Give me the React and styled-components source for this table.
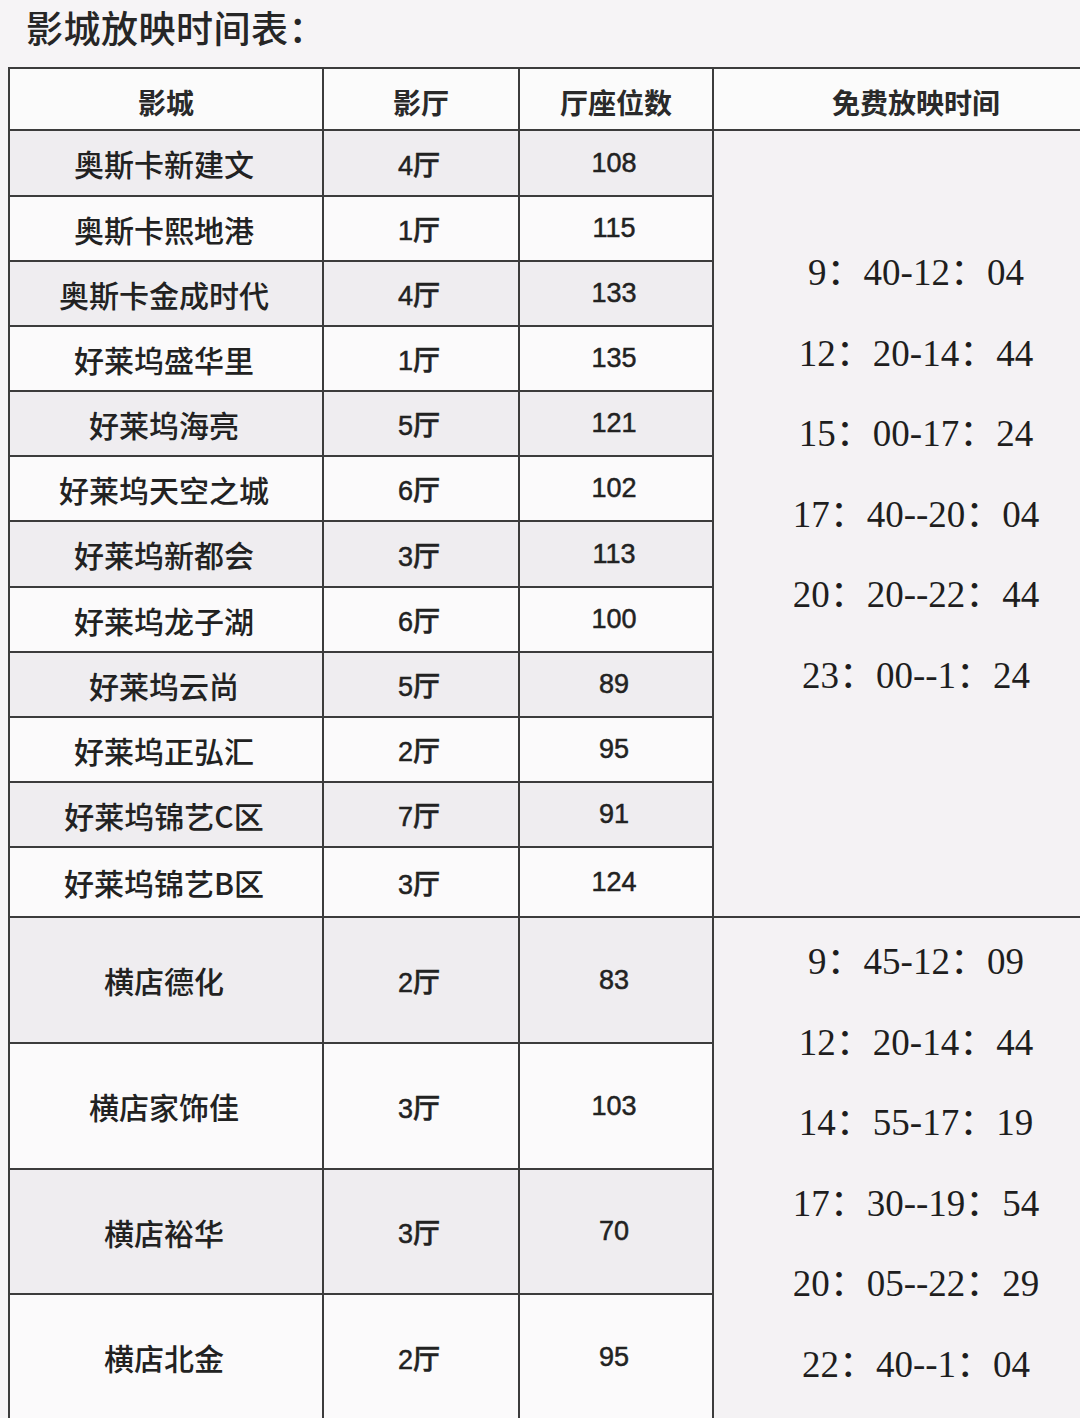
import React from "react";
import styled, { createGlobalStyle } from "styled-components";

const Global = createGlobalStyle`
  html, body {
    margin: 0;
    padding: 0;
    width: 1080px;
    height: 1418px;
    overflow: hidden;
    background: #f6f4f6;
  }
  body {
    font-family: "Noto Sans CJK SC", "Liberation Sans", sans-serif;
    color: #222;
  }
`;

const Page = styled.div`
  width: 1080px;
  height: 1418px;
  overflow: hidden;
  display: flex;
  flex-direction: column;
`;

const Title = styled.h1`
  margin: 8px 0 21px 26px;
  font-family: "Noto Sans CJK SC", sans-serif;
  font-size: 37px;
  line-height: 38px;
  font-weight: 500;
  color: #262626;
  letter-spacing: 0.5px;
`;

const Table = styled.div`
  margin-left: 8px;
  width: 1111px;
  display: grid;
  grid-template-columns: 314px 196px 194px 406px;
  grid-template-rows: 62px 66px 65px 65px 65px 65px 65px 66px 65px 65px 65px 65px 70px 126px 126px 125px 126px;
  border-left: 2px solid #3c3c3c;
  border-top: 2px solid #3c3c3c;
  box-sizing: border-box;
`;

const Cell = styled.div`
  box-sizing: border-box;
  border-right: 2px solid #3c3c3c;
  border-bottom: 2px solid #3c3c3c;
  display: flex;
  align-items: center;
  justify-content: center;
  background: ${(p) => (p.$shade ? "#efedf0" : "#fbfafb")};
  color: #222;
`;

const HeadCell = styled(Cell)`
  background: #fbfbfb;
  font-family: "Noto Sans CJK SC", sans-serif;
  font-size: 28px;
  font-weight: 700;
  padding-top: 6px;
  color: #2a2a2a;
`;

const NameCell = styled(Cell)`
  font-family: "Noto Sans CJK SC", sans-serif;
  font-size: 30px;
  font-weight: 500;
  padding-right: 4px;
`;

const NumCell = styled(Cell)`
  font-family: "Liberation Sans", "Noto Sans CJK SC", sans-serif;
  font-size: 27px;
  font-weight: 500;
  -webkit-text-stroke: 0.5px #222;
  padding-right: 4px;
`;

const TimeCell = styled.div`
  box-sizing: border-box;
  border-right: 2px solid #3c3c3c;
  border-bottom: 2px solid #3c3c3c;
  background: #f4f2f4;
  grid-column: 4;
  grid-row: ${(p) => p.$rows};
  display: flex;
  flex-direction: column;
  align-items: center;
  justify-content: flex-start;
  padding-top: ${(p) => p.$top}px;
`;

const TimeLine = styled.div`
  font-family: "Liberation Serif", "Noto Sans CJK SC", serif;
  font-size: 37px;
  line-height: 80.5px;
  color: #1e1e1e;
  white-space: nowrap;
`;

const groupA = [
  ["奥斯卡新建文", "4厅", "108"],
  ["奥斯卡熙地港", "1厅", "115"],
  ["奥斯卡金成时代", "4厅", "133"],
  ["好莱坞盛华里", "1厅", "135"],
  ["好莱坞海亮", "5厅", "121"],
  ["好莱坞天空之城", "6厅", "102"],
  ["好莱坞新都会", "3厅", "113"],
  ["好莱坞龙子湖", "6厅", "100"],
  ["好莱坞云尚", "5厅", "89"],
  ["好莱坞正弘汇", "2厅", "95"],
  ["好莱坞锦艺C区", "7厅", "91"],
  ["好莱坞锦艺B区", "3厅", "124"],
];

const groupB = [
  ["横店德化", "2厅", "83"],
  ["横店家饰佳", "3厅", "103"],
  ["横店裕华", "3厅", "70"],
  ["横店北金", "2厅", "95"],
];

const timesA = [
  "9：40-12：04",
  "12：20-14：44",
  "15：00-17：24",
  "17：40--20：04",
  "20：20--22：44",
  "23：00--1：24",
];

const timesB = [
  "9：45-12：09",
  "12：20-14：44",
  "14：55-17：19",
  "17：30--19：54",
  "20：05--22：29",
  "22：40--1：04",
];

function Row({ data, shade }) {
  return (
    <>
      <NameCell $shade={shade}>{data[0]}</NameCell>
      <NumCell $shade={shade}>{data[1]}</NumCell>
      <NumCell $shade={shade}>{data[2]}</NumCell>
    </>
  );
}

export default function App() {
  return (
    <Page>
      <Global />
      <Title>影城放映时间表：</Title>
      <Table>
        <HeadCell>影城</HeadCell>
        <HeadCell>影厅</HeadCell>
        <HeadCell>厅座位数</HeadCell>
        <HeadCell>免费放映时间</HeadCell>
        {groupA.map((r, i) => (
          <React.Fragment key={"a" + i}>
            <Row data={r} shade={i % 2 === 0} />
            {i === 0 && (
              <TimeCell $rows="2 / span 12" $top={102}>
                {timesA.map((t) => (
                  <TimeLine key={t}>{t}</TimeLine>
                ))}
              </TimeCell>
            )}
          </React.Fragment>
        ))}
        {groupB.map((r, i) => (
          <React.Fragment key={"b" + i}>
            <Row data={r} shade={i % 2 === 0} />
            {i === 0 && (
              <TimeCell $rows="14 / span 4" $top={4}>
                {timesB.map((t) => (
                  <TimeLine key={t}>{t}</TimeLine>
                ))}
              </TimeCell>
            )}
          </React.Fragment>
        ))}
      </Table>
    </Page>
  );
}
